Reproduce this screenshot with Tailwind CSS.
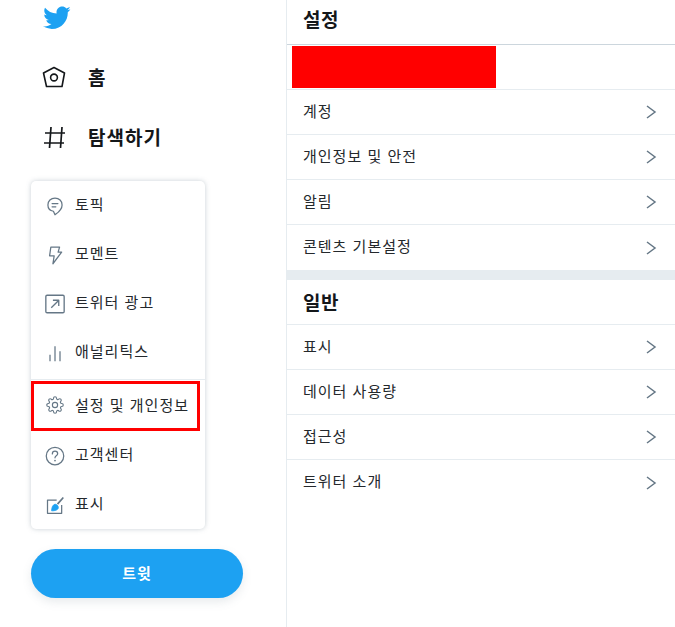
<!DOCTYPE html>
<html lang="ko">

<head>
  <meta charset="UTF-8" />
  <title>설정</title>
  <script src="https://cdn.jsdelivr.net/npm/@tailwindcss/browser@4"></script>
</head>

<body class="bg-white font-['Noto_Sans_CJK_KR','Noto_Sans',sans-serif] overflow-hidden">
  <div class="flex h-[627px] w-[675px]">
    <!-- 사이드바 -->
    <aside class="w-[287px] shrink-0 border-r border-[#e6ecf0] pl-[31px]">
      <svg class="ml-[11px] mt-[6px] w-[29px] h-[25px] block" viewBox="0 2.800 24 19.600" fill="#1da1f2"><path d="M23.643 4.937c-.835.37-1.732.62-2.675.733.962-.576 1.7-1.49 2.048-2.578-.9.534-1.897.922-2.958 1.13-.85-.904-2.06-1.47-3.4-1.47-2.572 0-4.658 2.086-4.658 4.66 0 .364.042.718.12 1.06-3.873-.195-7.304-2.05-9.602-4.868-.4.69-.63 1.49-.63 2.342 0 1.616.823 3.043 2.072 3.878-.764-.025-1.482-.234-2.11-.583v.06c0 2.257 1.605 4.14 3.737 4.568-.392.106-.803.162-1.227.162-.3 0-.593-.028-.877-.082.593 1.85 2.313 3.198 4.352 3.234-1.595 1.25-3.604 1.995-5.786 1.995-.376 0-.747-.022-1.112-.065 2.062 1.323 4.51 2.093 7.14 2.093 8.57 0 13.255-7.098 13.255-13.254 0-.2-.005-.402-.014-.602.91-.658 1.7-1.477 2.323-2.41z"/></svg>

      <nav class="mt-[16px] text-[#14171a] font-bold text-[19px] tracking-[1px]">
        <a class="flex items-center h-[60px]">
          <svg class="w-[26px] h-[26px] ml-[10px] mr-[21px]" viewBox="0 0 26 26" fill="none" stroke="#14171a" stroke-width="1.600" stroke-linejoin="round"><path d="M13 3.500L23.500 9 21 22.500H5.500L2.500 9Z"/><circle cx="13" cy="13.500" r="3.400"/></svg>
          <span>홈</span>
        </a>
        <a class="flex items-center h-[60px]">
          <svg class="w-[26px] h-[26px] ml-[10px] mr-[21px]" viewBox="0 0 26 26" fill="none" stroke="#14171a" stroke-width="1.700"><path d="M10 3L8.500 24M21 3L19.500 24M4 9H24M3 19H23"/></svg>
          <span>탐색하기</span>
        </a>
      </nav>

      <!-- 더보기 메뉴 -->
      <div class="relative mt-[14px] w-[174px] h-[348px] bg-white rounded-[5px] shadow-[0_0_5px_rgba(101,119,134,0.35)] text-[15px] tracking-[1px] text-[#24282c]">
        <a class="flex items-center h-[49px]">
          <svg class="w-[20px] h-[20px] ml-[14px] mr-[10px]" viewBox="0 0 24 24" fill="none" stroke="#657786" stroke-width="1.500" stroke-linejoin="round"><path d="M12 2.500c-5 0-8.500 3.600-8.500 8.200 0 4.200 3.200 7 6.600 7.600L12 22.500c2.700-2 8.500-5.600 8.500-11.800 0-4.600-3.500-8.200-8.500-8.200z"/><path d="M8.500 9h7M8.500 13h4.500" stroke-linecap="round"/></svg>
          <span class="mb-[2px]">토픽</span>
        </a>
        <a class="flex items-center h-[49px]">
          <svg class="w-[20px] h-[20px] ml-[14px] mr-[10px]" viewBox="0 0 24 24" fill="none" stroke="#657786" stroke-width="1.500" stroke-linejoin="round"><path d="M7 2.500h10.500l-1.800 6h4.300L9.500 22.500l1.500-9.500H5.500z"/></svg>
          <span class="mb-[2px]">모멘트</span>
        </a>
        <a class="flex items-center h-[49px]">
          <svg class="w-[20px] h-[20px] ml-[14px] mr-[10px]" viewBox="0 0 24 24" fill="none" stroke="#657786" stroke-width="1.600" stroke-linejoin="round"><rect x="1" y="1.500" width="22" height="21" rx="1.500"/><path d="M7.500 16.500l8.500-8.500M9.500 7.500H16.500V14.500"/></svg>
          <span class="mb-[2px]">트위터 광고</span>
        </a>
        <a class="flex items-center h-[49px]">
          <svg class="w-[20px] h-[20px] ml-[14px] mr-[10px]" viewBox="0 0 24 24" fill="none" stroke="#657786" stroke-width="1.500"><path d="M6 14v8M12 4v18M18 10v12"/></svg>
          <span class="mb-[2px]">애널리틱스</span>
        </a>
        <div class="h-px mt-[2px] bg-[#e6ecf0]"></div>
        <a class="flex items-center h-[50px]">
          <svg class="w-[18px] h-[18px] ml-[15px] mr-[11px]" viewBox="0 0 24 24" fill="none" stroke="#657786" stroke-width="1.500" stroke-linejoin="round"><circle cx="12" cy="12" r="3.500"/><path d="M19.400 15a1.650 1.650 0 0 0 .33 1.820l.06.06a2 2 0 0 1 0 2.830 2 2 0 0 1-2.830 0l-.06-.06a1.650 1.650 0 0 0-1.820-.33 1.650 1.650 0 0 0-1 1.510V21a2 2 0 0 1-2 2 2 2 0 0 1-2-2v-.09A1.650 1.650 0 0 0 9 19.400a1.650 1.650 0 0 0-1.820.33l-.06.06a2 2 0 0 1-2.830 0 2 2 0 0 1 0-2.830l.06-.06a1.650 1.650 0 0 0 .33-1.820 1.650 1.650 0 0 0-1.510-1H3a2 2 0 0 1-2-2 2 2 0 0 1 2-2h.09A1.650 1.650 0 0 0 4.600 9a1.650 1.650 0 0 0-.33-1.820l-.06-.06a2 2 0 0 1 0-2.830 2 2 0 0 1 2.830 0l.06.06a1.650 1.650 0 0 0 1.820.33H9a1.650 1.650 0 0 0 1-1.510V3a2 2 0 0 1 2-2 2 2 0 0 1 2 2v.09a1.650 1.650 0 0 0 1 1.510 1.650 1.650 0 0 0 1.820-.33l.06-.06a2 2 0 0 1 2.830 0 2 2 0 0 1 0 2.830l-.06.06a1.650 1.650 0 0 0-.33 1.820V9a1.650 1.650 0 0 0 1.510 1H21a2 2 0 0 1 2 2 2 2 0 0 1-2 2h-.09a1.650 1.650 0 0 0-1.510 1z"/></svg>
          <span>설정 및 개인정보</span>
        </a>
        <a class="flex items-center h-[49px] mt-px">
          <svg class="w-[20px] h-[20px] ml-[14px] mr-[10px]" viewBox="0 0 24 24" fill="none" stroke="#657786" stroke-width="1.500" stroke-linecap="round"><circle cx="12" cy="12" r="10.500"/><path d="M8.800 9.500c0-2 1.400-3.300 3.200-3.300s3.200 1.200 3.200 3c0 2.600-3.200 2.600-3.200 5"/><path d="M12 17.500v.2" stroke-width="2"/></svg>
          <span class="mb-[2px]">고객센터</span>
        </a>
        <a class="flex items-center h-[49px]">
          <svg class="w-[20px] h-[20px] ml-[14px] mr-[10px]" viewBox="0 0 24 24" fill="none" stroke="#657786" stroke-width="1.500" stroke-linejoin="round"><path d="M14 6H3v16h17V12"/><path d="M8 19c0-4 1-7 4-8 2 0 4 2 4 4 0 3-4 4-8 4z" fill="#1da1f2" stroke="#1da1f2" stroke-width="1"/><path d="M15 11L22 3" stroke-width="2"/></svg>
          <span class="mb-[2px]">표시</span>
        </a>
        <!-- 빨간 강조 상자 -->
        <div class="absolute left-0 top-[200px] w-[169px] h-[50px] border-[3px] border-[#ff0000]"></div>
      </div>

      <button class="mt-[20px] w-[212px] h-[49px] rounded-full bg-[#1da1f2] text-white font-bold text-[15px] tracking-[1px] shadow-[0_4px_10px_rgba(101,119,134,0.15)]">트윗</button>
    </aside>

    <!-- 설정 목록 -->
    <main class="flex-1 min-w-0 text-[#24282c]">
      <h1 class="h-[45px] border-b border-[#ccd6dd] px-[16px] pb-[6px] flex items-center font-bold text-[19px] tracking-[0.5px] text-[#14171a]">설정</h1>
      <div class="h-[45px] border-b border-[#e6ecf0] pl-[5px] pt-px">
        <div class="w-[204px] h-[42px] bg-[#ff0000]"></div>
      </div>
      <a class="flex items-center justify-between h-[45px] border-b border-[#e6ecf0] pl-[16px] pr-[14px] text-[15px] tracking-[1px]"><span class="mb-[2px]">계정</span>
        <svg class="w-[20px] h-[20px]" viewBox="0 0 20 20" fill="none" stroke="#657786" stroke-width="1.500"><path d="M6 4l8 6-8 6"/></svg></a>
      <a class="flex items-center justify-between h-[45px] border-b border-[#e6ecf0] pl-[16px] pr-[14px] text-[15px] tracking-[1px]"><span class="mb-[2px]">개인정보 및 안전</span>
        <svg class="w-[20px] h-[20px]" viewBox="0 0 20 20" fill="none" stroke="#657786" stroke-width="1.500"><path d="M6 4l8 6-8 6"/></svg></a>
      <a class="flex items-center justify-between h-[45px] border-b border-[#e6ecf0] pl-[16px] pr-[14px] text-[15px] tracking-[1px]"><span class="mb-[2px]">알림</span>
        <svg class="w-[20px] h-[20px]" viewBox="0 0 20 20" fill="none" stroke="#657786" stroke-width="1.500"><path d="M6 4l8 6-8 6"/></svg></a>
      <a class="flex items-center justify-between h-[45px] pl-[16px] pr-[14px] text-[15px] tracking-[1px]"><span class="mb-[2px]">콘텐츠 기본설정</span>
        <svg class="w-[20px] h-[20px]" viewBox="0 0 20 20" fill="none" stroke="#657786" stroke-width="1.500"><path d="M6 4l8 6-8 6"/></svg></a>
      <div class="h-[10px] bg-[#e6ecf0]"></div>
      <h2 class="h-[45px] border-b border-[#e6ecf0] px-[16px] flex items-center font-bold text-[19px] tracking-[0.5px] text-[#14171a]">일반</h2>
      <a class="flex items-center justify-between h-[45px] border-b border-[#e6ecf0] pl-[16px] pr-[14px] text-[15px] tracking-[1px]"><span class="mb-[2px]">표시</span>
        <svg class="w-[20px] h-[20px]" viewBox="0 0 20 20" fill="none" stroke="#657786" stroke-width="1.500"><path d="M6 4l8 6-8 6"/></svg></a>
      <a class="flex items-center justify-between h-[45px] border-b border-[#e6ecf0] pl-[16px] pr-[14px] text-[15px] tracking-[1px]"><span class="mb-[2px]">데이터 사용량</span>
        <svg class="w-[20px] h-[20px]" viewBox="0 0 20 20" fill="none" stroke="#657786" stroke-width="1.500"><path d="M6 4l8 6-8 6"/></svg></a>
      <a class="flex items-center justify-between h-[45px] border-b border-[#e6ecf0] pl-[16px] pr-[14px] text-[15px] tracking-[1px]"><span class="mb-[2px]">접근성</span>
        <svg class="w-[20px] h-[20px]" viewBox="0 0 20 20" fill="none" stroke="#657786" stroke-width="1.500"><path d="M6 4l8 6-8 6"/></svg></a>
      <a class="flex items-center justify-between h-[45px] pl-[16px] pr-[14px] text-[15px] tracking-[1px]"><span class="mb-[2px]">트위터 소개</span>
        <svg class="w-[20px] h-[20px]" viewBox="0 0 20 20" fill="none" stroke="#657786" stroke-width="1.500"><path d="M6 4l8 6-8 6"/></svg></a>
    </main>
  </div>
</body>

</html>
